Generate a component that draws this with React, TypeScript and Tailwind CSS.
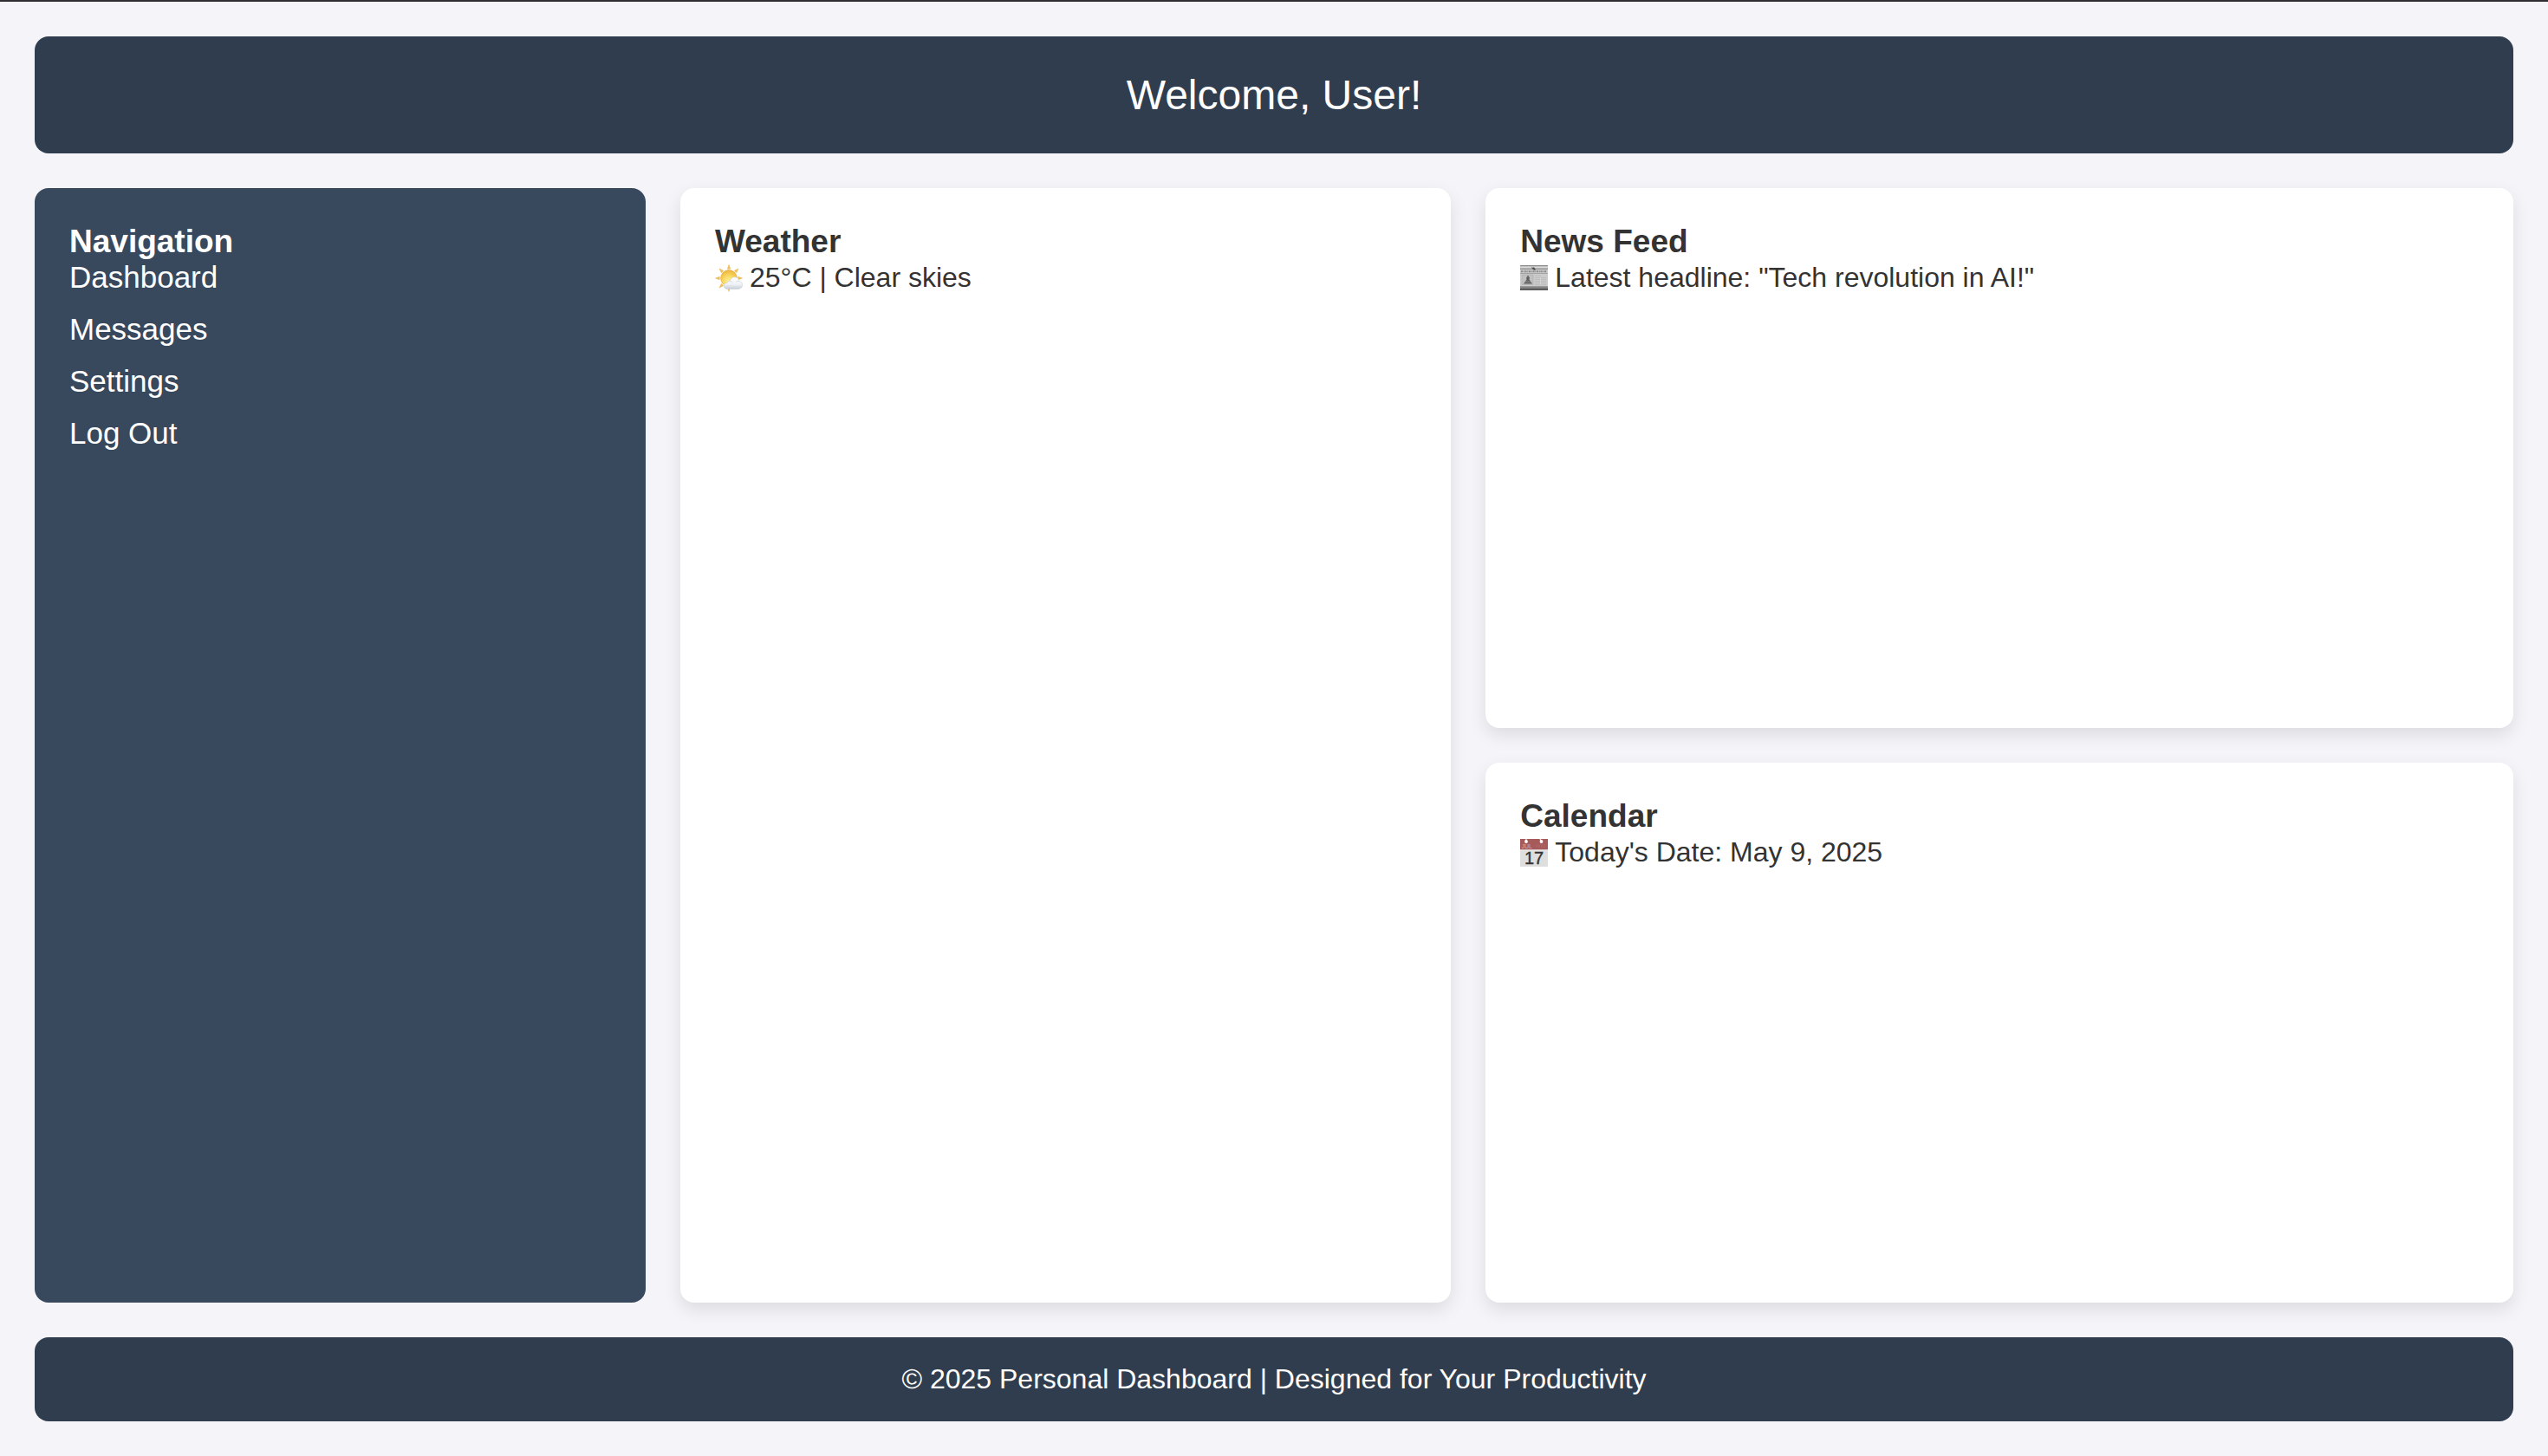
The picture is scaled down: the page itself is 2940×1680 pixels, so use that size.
import type { ReactNode } from "react";

const links = ["Dashboard", "Messages", "Settings", "Log Out"];

function SunIcon() {
  return (
    <svg viewBox="0 0 32 32" className="size-8 shrink-0" aria-hidden="true">
      <defs>
        <radialGradient id="sun" cx="0.5" cy="0.7" r="0.7">
          <stop offset="0" stopColor="#fdf0a0" />
          <stop offset="0.55" stopColor="#f8d65c" />
          <stop offset="1" stopColor="#eeb23c" />
        </radialGradient>
        <linearGradient id="cloud" x1="0" y1="0" x2="0" y2="1">
          <stop offset="0" stopColor="#ffffff" />
          <stop offset="0.6" stopColor="#eff2f6" />
          <stop offset="1" stopColor="#c6cdd7" />
        </linearGradient>
      </defs>
      <g fill="#f3c24e" stroke="#e0a43c" strokeWidth="0.4">
        <path d="M16 0.5l1.7 4.8h-3.4z" />
        <path d="M16 31.5l1.2-4h-2.4z" />
        <path d="M0.5 16l4.8-1.7v3.4z" />
        <path d="M31.5 16l-4.8-1.7v3.4z" />
        <path d="M5 5l4.7 2.3-2.4 2.4z" />
        <path d="M27 5l-4.7 2.3 2.4 2.4z" />
        <path d="M5 27l2.3-4.7 2.4 2.4z" />
      </g>
      <circle cx="16" cy="16" r="9.4" fill="url(#sun)" stroke="#e3a63a" strokeWidth="0.6" />
      <path
        d="M14.5 28.5c-2.6 0-4.3-1.6-4.3-3.7 0-2.2 1.8-3.6 3.9-3.4 0.3-1.4 1.5-2.2 3-2 0.9-3 3.2-4.9 6.1-4.6 2.7 0.3 4.4 2.2 4.6 4.7 2.4 0.3 4 2 3.9 4.3-0.1 2.7-2.2 4.7-5 4.7z"
        fill="url(#cloud)"
        stroke="#c5cbd5"
        strokeWidth="0.5"
      />
      <path d="M17.1 19.4c1.8-0.1 3 0.8 3.4 2.2M24 20.2c1.2-1 2.6-1.1 3.8-0.7" fill="none" stroke="#d3d9e2" strokeWidth="0.8" />
    </svg>
  );
}

function NewspaperIcon() {
  return (
    <svg viewBox="0 0 32 32" className="size-8 shrink-0" aria-hidden="true">
      <defs>
        <linearGradient id="fold" x1="0" y1="0" x2="0" y2="1">
          <stop offset="0" stopColor="#a2a2a2" />
          <stop offset="1" stopColor="#4c4c4c" />
        </linearGradient>
      </defs>
      <rect y="1" width="32" height="29" fill="#cbcbcb" />
      <rect y="1" width="32" height="1.5" fill="#8b8b8b" />
      <rect y="2.5" width="32" height="2" fill="#dadada" />
      <rect y="4.5" width="32" height="1.5" fill="#959595" />
      <path d="M13 3l2 1 1-1 1 2 1 0-1 2-2-1-1-1z" fill="#4e4e4e" />
      <path d="M1 8.3h30" stroke="#8a8a8a" strokeWidth="2" strokeDasharray="2 0.8 1 0.7" />
      <rect y="10" width="32" height="1" fill="#a4a4a4" />
      <rect x="2" y="12" width="13" height="11.5" fill="#c0c0c0" stroke="#a8a8a8" strokeWidth="0.5" />
      <path d="M4 22.5l3.5-5-0.5-1.5 2-3.5 2 3-0.5 2 3.5 5z" fill="#606060" />
      <path d="M6 19.5h6M5.5 21h8" stroke="#979797" strokeWidth="0.5" />
      <path d="M17 13h7M17 15.5h13M17 17.5h13M17 19.5h13M17 21.5h13M17 23.5h13" stroke="#b8b8b8" strokeWidth="0.7" />
      <path d="M23.5 15v9M2 25h12" stroke="#dedede" strokeWidth="0.6" />
      <rect y="25" width="32" height="5" fill="url(#fold)" />
    </svg>
  );
}

function CalendarIcon() {
  return (
    <svg viewBox="0 0 32 32" className="size-8 shrink-0" aria-hidden="true">
      <rect width="32" height="32" fill="#dedede" />
      <rect width="32" height="12.5" fill="#a65b5a" />
      <rect y="12.5" width="32" height="1" fill="#eeeeee" />
      <path d="M7 0v3M23 0l1.5 3" stroke="#f5eeee" strokeWidth="1.2" />
      <circle cx="7" cy="3" r="1.9" fill="#ffffff" />
      <circle cx="24.5" cy="3" r="1.9" fill="#ffffff" />
      <text x="1.5" y="11" fontSize="7" fill="#d9b0b0" fontFamily="Liberation Sans, sans-serif">
        JUL
      </text>
      <path d="M18 9h12M18 7h11" stroke="#ae6867" strokeWidth="1.2" strokeDasharray="2 1" />
      <text x="16" y="29" textAnchor="middle" fontSize="20" fill="#333333" stroke="#333333" strokeWidth="0.4" fontFamily="Liberation Sans, sans-serif">
        17
      </text>
    </svg>
  );
}

function Card({ title, icon, children }: { title: string; icon: ReactNode; children: ReactNode }) {
  return (
    <section className="rounded-2xl bg-white p-10 shadow-[0_8px_20px_rgba(0,0,0,0.1)]">
      <h2 className="text-[37px] leading-[43px] font-bold">{title}</h2>
      <p className="flex items-center gap-2 pt-0.5 leading-[37px]">
        {icon}
        <span>{children}</span>
      </p>
    </section>
  );
}

export default function App() {
  return (
    <div className="flex min-h-screen flex-col gap-10 border-t-2 border-[#302d33] bg-[#f4f4f9] p-10 font-['Liberation_Sans',Arial,sans-serif] text-[32px] text-[#333333]">
      <header className="rounded-2xl bg-[#303d4e] p-10 text-center text-white">
        <h1 className="text-5xl leading-[55px]">Welcome, User!</h1>
      </header>
      <div className="grid flex-1 grid-cols-[1fr_3fr] gap-10">
        <nav aria-labelledby="nav-title" className="rounded-2xl bg-[#38485d] p-10 text-white">
          <h2 id="nav-title" className="text-[37px] leading-[43px] font-bold">
            Navigation
          </h2>
          <ul className="flex flex-col gap-5 text-[35px] leading-10">
            {links.map((label) => (
              <li key={label}>
                <a href="#">{label}</a>
              </li>
            ))}
          </ul>
        </nav>
        <main className="grid grid-cols-[3fr_4fr] gap-10">
          <Card title="Weather" icon={<SunIcon />}>
            25°C | Clear skies
          </Card>
          <div className="grid grid-rows-2 gap-10">
            <Card title="News Feed" icon={<NewspaperIcon />}>
              Latest headline: "Tech revolution in AI!"
            </Card>
            <Card title="Calendar" icon={<CalendarIcon />}>
              Today's Date: May 9, 2025
            </Card>
          </div>
        </main>
      </div>
      <footer className="rounded-2xl bg-[#303d4e] px-10 py-[30px] text-center leading-[37px] text-white">
        © 2025 Personal Dashboard | Designed for Your Productivity
      </footer>
    </div>
  );
}
